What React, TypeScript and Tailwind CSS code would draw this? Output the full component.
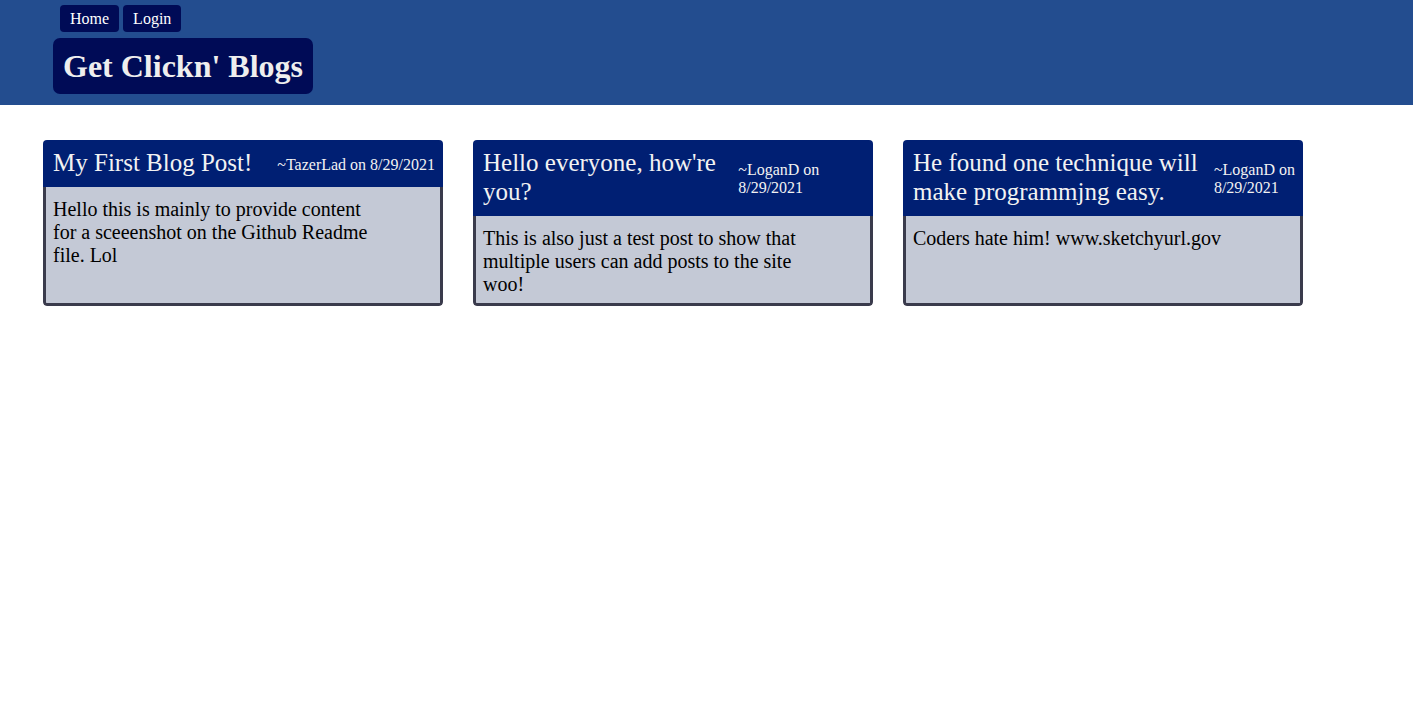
import React from "react";

interface Post {
  title: string;
  author: string;
  date: string;
  body: string;
}

const posts: Post[] = [
  {
    title: "My First Blog Post!",
    author: "TazerLad",
    date: "8/29/2021",
    body: "Hello this is mainly to provide content for a sceeenshot on the Github Readme file. Lol",
  },
  {
    title: "Hello everyone, how're you?",
    author: "LoganD",
    date: "8/29/2021",
    body: "This is also just a test post to show that multiple users can add posts to the site woo!",
  },
  {
    title: "He found one technique will make programmjng easy.",
    author: "LoganD",
    date: "8/29/2021",
    body: "Coders hate him! www.sketchyurl.gov",
  },
];

const PostCard: React.FC<{ post: Post }> = ({ post }) => (
  <div className="w-[400px] flex flex-col rounded-[4px] overflow-hidden">
    <div className="flex items-center justify-between gap-[12px] bg-[#001f73] pl-[10px] pr-[8px] py-[9px] text-[#f2f2f2]">
      <h2 className="text-[25px] leading-[1.15]">{post.title}</h2>
      <p className="text-[16px] leading-[1.15] pt-[3px]">
        <span className="whitespace-nowrap">~{post.author} on</span> {post.date}
      </p>
    </div>
    <div className="flex-1 bg-[#c4c9d6] border-x-[3px] border-b-[3px] border-[#3a3b4c] rounded-b-[4px] px-[7px] pt-[11px] pb-[7px]">
      <p className="max-w-[325px] text-[20px] leading-[23px] text-black">{post.body}</p>
    </div>
  </div>
);

const App: React.FC = () => {
  return (
    <div className="min-h-screen bg-white font-['Liberation_Serif','Times_New_Roman',serif]">
      <header className="h-[105px] bg-[#234d8f]">
        <nav className="flex gap-[4px] pl-[60px] pt-[5px]">
          <a className="h-[27px] px-[10px] flex items-center rounded-[4px] bg-[#000b56] text-white text-[16px] cursor-pointer">
            Home
          </a>
          <a className="h-[27px] px-[10px] flex items-center rounded-[4px] bg-[#000b56] text-white text-[16px] cursor-pointer">
            Login
          </a>
        </nav>
        <div className="ml-[53px] mt-[6px] w-fit h-[56px] flex items-center px-[10px] rounded-[7px] bg-[#000b56]">
          <h1 className="text-[32px] font-bold text-[#eeeeee]">Get Clickn' Blogs</h1>
        </div>
      </header>

      <main className="flex items-stretch gap-[30px] pl-[43px] pt-[35px]">
        {posts.map((post, index) => (
          <PostCard key={index} post={post} />
        ))}
      </main>
    </div>
  );
};

export default App;
